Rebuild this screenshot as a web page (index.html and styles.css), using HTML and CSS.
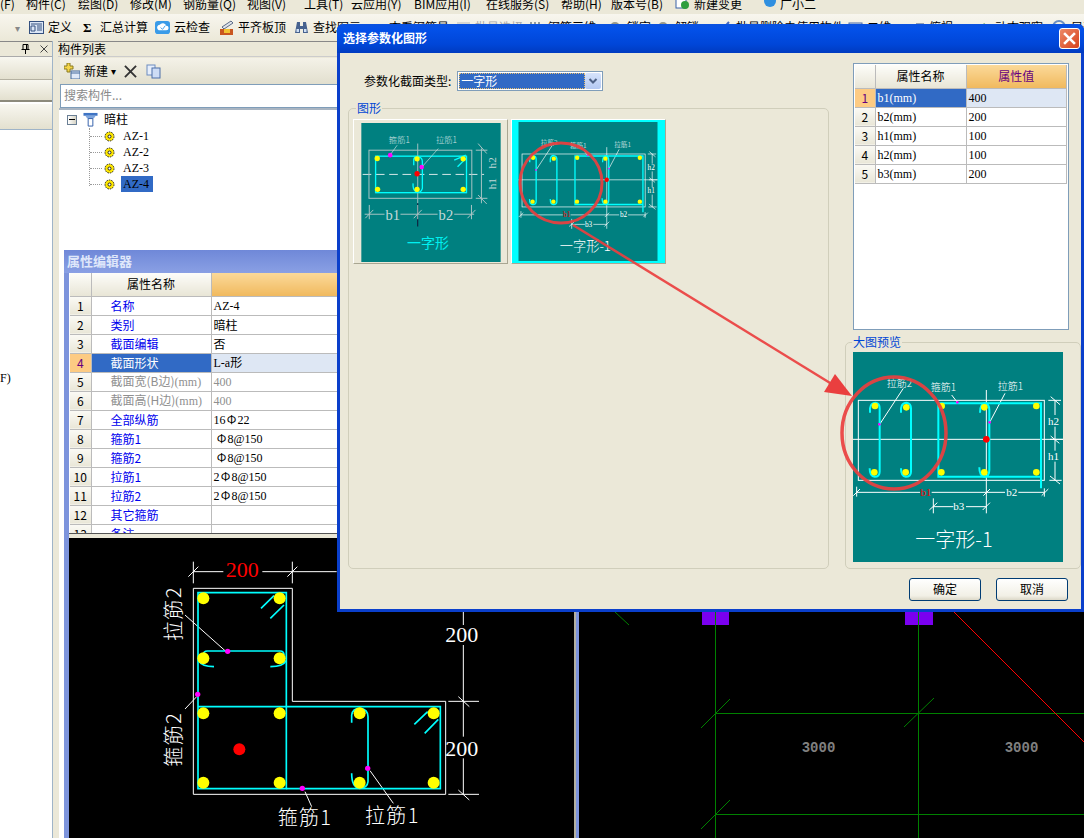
FILE: index.html
```html
<!DOCTYPE html>
<html lang="zh-CN">
<head>
<meta charset="utf-8">
<title>选择参数化图形</title>
<link rel="stylesheet" href="styles.css">
</head>
<body>
<div class="app">
  <nav class="menubar">
    <span>(F)</span><span>构件(C)</span><span>绘图(D)</span><span>修改(M)</span><span>钢筋量(Q)</span><span>视图(V)</span><span>工具(T)</span><span>云应用(Y)</span><span>BIM应用(I)</span><span>在线服务(S)</span><span>帮助(H)</span><span>版本号(B)</span>
    <svg class="ico" viewBox="0 0 15 15"><rect x="1" y="1" width="10" height="12" fill="#fff" stroke="#3a62a8"/><circle cx="10" cy="10" r="4" fill="#2f9e3f"/></svg>
    <span>新建变更</span>
    <svg class="ico" viewBox="0 0 15 15"><circle cx="7" cy="6" r="6" fill="#2f8fe0"/></svg>
    <span>广小二</span>
  </nav>
  <div class="toolbar">
    <span class="grip">▾</span>
    <span class="tool"><svg class="ico" viewBox="0 0 15 15"><rect x=".5" y="1.5" width="14" height="12" fill="#dbe6f6" stroke="#34507f"/><path d="M2 4h11M8 6h5M8 8h5M8 10h5M2 6h4v5H2z" stroke="#34507f" fill="none"/></svg>定义</span>
    <span class="tool sumtool"><b class="sigma">Σ</b>汇总计算</span>
    <span class="tool"><svg class="ico" viewBox="0 0 16 16"><rect x="0" y="1" width="16" height="14" rx="3" fill="#3a9be8"/><path d="M3 10a3 3 0 0 1 2-5 4 4 0 0 1 7 1 2.500 2.500 0 0 1 0 5H4z" fill="#fff"/><path d="M6 8l2 2 3-4" stroke="#3a9be8" fill="none"/></svg>云检查</span>
    <span class="tool"><svg class="ico" viewBox="0 0 15 15"><path d="M1 9h13v6H1z" fill="#c9561f"/><path d="M3 7l9-6 2 2-9 6z" fill="#dfe3ea" stroke="#5a6a86"/><rect x="5" y="9" width="6" height="4" fill="#f2c230"/></svg>平齐板顶</span>
    <span class="tool"><svg class="ico" viewBox="0 0 15 15"><path d="M3 2h3v4h3V2h3l2 11H9V9H6v4H1z" fill="#47628f"/><rect x="2.500" y="9" width="2.500" height="3" fill="#cfe0f5"/><rect x="10" y="9" width="2.500" height="3" fill="#cfe0f5"/></svg>查找图元</span>
    <span class="tool"><svg class="ico" viewBox="0 0 15 15"><path d="M2 12l5-5M8 10l5-5" stroke="#666"/></svg>查看钢筋量</span>
    <span class="tool off"><svg class="ico" viewBox="0 0 15 15"><path d="M1 3h13M3 7h9M1 11h13" stroke="#bbb"/></svg>批量选择</span>
    <span class="tool"><svg class="ico" viewBox="0 0 15 15"><path d="M2 2v11M6 2v11M10 2v11M1 5h12" stroke="#345"/></svg>钢筋三维</span>
    <span class="tool"><svg class="ico" viewBox="0 0 15 15"><circle cx="7" cy="7" r="4" fill="none" stroke="#998" stroke-width="2"/></svg>锁定</span>
    <span class="tool"><svg class="ico" viewBox="0 0 15 15"><circle cx="7" cy="7" r="4" fill="none" stroke="#998" stroke-width="2"/></svg>解锁</span>
    <span class="tool"><svg class="ico" viewBox="0 0 15 15"><path d="M2 13L12 2" stroke="#46b" stroke-width="2"/></svg>批量删除未使用构件</span>
    <span class="tool"><svg class="ico" viewBox="0 0 15 15"><rect x="1" y="3" width="13" height="10" fill="#cfdcf2" stroke="#4a6aa5"/></svg>二维</span>
    <span class="tool"><svg class="ico" viewBox="0 0 15 15"><path d="M1 13l5-9h8l-5 9z" fill="#6f8fc4" stroke="#334d7a"/></svg>俯视</span>
    <span class="tool"><svg class="ico" viewBox="0 0 15 15"><path d="M2 12l6-9 5 4-3 6z" fill="#5aa05a"/></svg>动态观察</span>
    <span class="tool"><svg class="ico" viewBox="0 0 15 15"><circle cx="7" cy="7" r="6" fill="none" stroke="#6b8fc2" stroke-width="2"/></svg>局部</span>
  </div>

  <main class="main">
    <aside class="leftpane">
      <div class="lefthead">
        <svg class="pin" viewBox="0 0 9 10"><path d="M2 .5h5v5H2zM.5 5.500h8M4.500 6v4M5.500 1v4" fill="none" stroke="#000"/></svg>
        <svg class="closex" viewBox="0 0 8 8"><path d="M.5.5l7 7M7.500.5l-7 7" stroke="#444"/></svg>
      </div>
      <div class="leftbtn"></div>
      <div class="leftbtn raised"></div>
      <div class="leftbtn tall"></div>
      <div class="leftbody"><span class="leftnote">F)</span></div>
    </aside>
    <section class="center">
      <div class="listhead">构件列表</div>
      <div class="listtools">
        <svg class="ico new" viewBox="0 0 16 16"><path d="M3 0h3v3h3v3H6v3H3V6H0V3h3z" fill="#f4d54a" stroke="#8a7a20"/><rect x="7" y="8" width="9" height="8" fill="#dfe9f8" stroke="#456a9c"/><path d="M7 10h9" stroke="#456a9c"/></svg>
        <span>新建</span><span class="caret">▾</span>
        <svg class="ico del" viewBox="0 0 14 14"><path d="M1 1l12 12M13 1L1 13" stroke="#333" stroke-width="2"/></svg>
        <svg class="ico" viewBox="0 0 15 15"><rect x="1" y="1" width="8" height="10" fill="#e6eefb" stroke="#6d8cc0"/><rect x="6" y="4" width="8" height="10" fill="#cddcf5" stroke="#4d6fa8"/></svg>
      </div>
      <div class="search">搜索构件...</div>
      <div class="treepane">
        <div class="tree">
          <div class="treeroot">
            <span class="minus"></span>
            <svg class="ico col" viewBox="0 0 15 16"><path d="M0 1h15v3H0z" fill="#3f74c4"/><path d="M2 4h11l-2 3H4z" fill="#7fa6de"/><path d="M5 7h5v8H5z" fill="#fff" stroke="#2c5aa8"/></svg>
            <span>暗柱</span>
          </div>
          <div class="treekids">
            <div class="treeitem"><i class="stem"></i><svg class="gear" viewBox="0 0 11 11"><circle cx="5.500" cy="5.500" r="4.500" fill="#ffe800" stroke="#222" stroke-dasharray="1.500 1"/><circle cx="5.500" cy="5.500" r="1.500" fill="#fff" stroke="#222"/></svg><span class="mono">AZ-1</span></div>
            <div class="treeitem"><i class="stem"></i><svg class="gear" viewBox="0 0 11 11"><circle cx="5.500" cy="5.500" r="4.500" fill="#ffe800" stroke="#222" stroke-dasharray="1.500 1"/><circle cx="5.500" cy="5.500" r="1.500" fill="#fff" stroke="#222"/></svg><span class="mono">AZ-2</span></div>
            <div class="treeitem"><i class="stem"></i><svg class="gear" viewBox="0 0 11 11"><circle cx="5.500" cy="5.500" r="4.500" fill="#ffe800" stroke="#222" stroke-dasharray="1.500 1"/><circle cx="5.500" cy="5.500" r="1.500" fill="#fff" stroke="#222"/></svg><span class="mono">AZ-3</span></div>
            <div class="treeitem"><i class="stem"></i><svg class="gear" viewBox="0 0 11 11"><circle cx="5.500" cy="5.500" r="4.500" fill="#ffe800" stroke="#222" stroke-dasharray="1.500 1"/><circle cx="5.500" cy="5.500" r="1.500" fill="#fff" stroke="#222"/></svg><span class="mono sel">AZ-4</span></div>
          </div>
        </div>
        <div class="props">
          <div class="propstitle">属性编辑器</div>
          <div class="propswrap">
            <table class="grid propsgrid">
              <colgroup><col class="c-num"><col class="c-name"><col></colgroup>
              <thead><tr><th></th><th>属性名称</th><th class="valhead">属性值</th></tr></thead>
              <tbody>
                <tr><th>1</th><td class="link">名称</td><td class="mono">AZ-4</td></tr>
                <tr><th>2</th><td class="link">类别</td><td>暗柱</td></tr>
                <tr><th>3</th><td class="link">截面编辑</td><td>否</td></tr>
                <tr class="cur"><th>4</th><td class="link">截面形状</td><td><span class="mono">L-a</span>形</td></tr>
                <tr class="dim"><th>5</th><td class="link">截面宽(B边)<span class="mono">(mm)</span></td><td class="mono">400</td></tr>
                <tr class="dim"><th>6</th><td class="link">截面高(H边)<span class="mono">(mm)</span></td><td class="mono">400</td></tr>
                <tr><th>7</th><td class="link">全部纵筋</td><td class="mono">16<span class="rebar">Φ</span>22</td></tr>
                <tr><th>8</th><td class="link">箍筋1</td><td class="mono"><span class="rebar lead">Φ</span>8@150</td></tr>
                <tr><th>9</th><td class="link">箍筋2</td><td class="mono"><span class="rebar lead">Φ</span>8@150</td></tr>
                <tr><th>10</th><td class="link">拉筋1</td><td class="mono">2<span class="rebar">Φ</span>8@150</td></tr>
                <tr><th>11</th><td class="link">拉筋2</td><td class="mono">2<span class="rebar">Φ</span>8@150</td></tr>
                <tr><th>12</th><td class="link">其它箍筋</td><td></td></tr>
                <tr><th>13</th><td class="link">备注</td><td></td></tr>
              </tbody>
            </table>
          </div>
          <div class="propsfoot"></div>
          <div class="canvases">
            <svg class="cad" viewBox="27 -6 1515 900">
              <g fill="none" stroke="#fff" stroke-width="3">
                <path d="M400 145H697V484H1157V763H400Z"/>
                <path d="M400 65V130M697 65V130M385 110L415 80M682 110L712 80M400 95H490M607 95H830"/>
                <path d="M1210 215V255M1210 315V590M1210 655V763M1165 484H1257M1165 763H1257M1195 470L1228 500M1195 750L1228 780"/>
                <path d="M375 225L495 332M375 507L410 470M735 755L755 800M930 692L1000 790"/>
              </g>
              <g fill="none" stroke="#00ffff" stroke-width="5">
                <path d="M414 158H679V746H414Z"/>
                <path d="M414 500H1141V746H679"/>
                <path d="M430 345Q430 333 442 333H660Q672 333 672 345M416 362Q425 380 462 380M678 362Q670 380 631 380"/>
                <path d="M875 548V525Q878 505 900 505Q924 508 924 530V725Q922 745 898 745Q875 742 875 700"/>
                <path d="M603 205L642 167M631 235L672 195M1063 553L1103 515M1094 580L1135 538"/>
              </g>
              <g fill="#ffff00">
                <circle cx="430" cy="175" r="18"/><circle cx="659" cy="175" r="18"/><circle cx="430" cy="355" r="18"/><circle cx="659" cy="355" r="18"/><circle cx="430" cy="520" r="18"/><circle cx="659" cy="520" r="18"/><circle cx="430" cy="728" r="18"/><circle cx="659" cy="728" r="18"/><circle cx="899" cy="520" r="18"/><circle cx="1121" cy="520" r="18"/><circle cx="899" cy="728" r="18"/><circle cx="1121" cy="728" r="18"/>
              </g>
              <circle cx="538" cy="628" r="18" fill="#ff0000"/>
              <g fill="#ff00ff"><circle cx="503" cy="334" r="8"/><circle cx="413" cy="463" r="8"/><circle cx="923" cy="685" r="8"/><circle cx="727" cy="745" r="8"/></g>
              <text class="num big red" x="497" y="110">200</text>
              <text class="num big" x="1156" y="307">200</text>
              <text class="num big" x="1156" y="649">200</text>
              <text class="cjk lbl" x="653" y="856">箍筋1</text>
              <text class="cjk lbl" x="915" y="850">拉筋1</text>
              <text class="cjk lbl" transform="translate(362 303) rotate(-90)">拉筋2</text>
              <text class="cjk lbl" transform="translate(362 680) rotate(-90)">箍筋2</text>
            </svg>
            <div class="splitter"></div>
            <svg class="cad" viewBox="579 538 505 300">
              <g fill="none" stroke="#008000">
                <path d="M715.500 538V838M918.500 538V838M715.500 713.500H1084M715.500 814.500H1084"/>
                <path d="M701 728L730 699M904 727L934 698M701 829L730 800M615 612L629 625"/>
              </g>
              <path d="M702 538h27v87h-27zM905 538h28v87h-28z" fill="#7a00f0"/>
              <path d="M715.500 538v87M918.500 538v87" stroke="#008000"/>
              <path d="M950 608L1084 742" stroke="#ff0000"/>
              <text class="dimtxt" x="818.500" y="752">3000</text>
              <text class="dimtxt" x="1021.500" y="752">3000</text>
            </svg>
          </div>
        </div>
      </div>
    </section>
  </main>

  <div class="dialog">
    <header class="dlgtitle">
      <span>选择参数化图形</span>
      <span class="dlgclose"><svg viewBox="0 0 12 12"><path d="M1 1l10 10M11 1L1 11" stroke="#fff" stroke-width="2.400"/></svg></span>
    </header>
    <div class="dlgbody">
      <div class="dlgmain">
        <div class="dlgleft">
          <div class="comborow">
            <span>参数化截面类型:</span>
            <div class="combo"><span class="comboval">一字形</span><span class="comboarrow"><svg viewBox="0 0 9 7"><path d="M1 1l3.500 3.500L8 1" fill="none" stroke="#4d6185" stroke-width="2"/></svg></span></div>
          </div>
          <fieldset class="group shapes">
            <legend>图形</legend>
            <div class="thumbs">
              <div class="thumb">
                <svg class="drawing small" viewBox="60 68 420 419">
                  <rect x="60" y="68" width="420" height="419" fill="#008080"/>
                  <path d="M64 223H430" stroke="#d8e8e8" stroke-width="3" stroke-dasharray="26 14"/>
                  <path d="M230 130V310" stroke="#9fc0c0" stroke-width="3"/><path d="M230 310V380" stroke="#113" stroke-width="3"/>
                  <rect x="83" y="150" width="310" height="145" fill="none" stroke="#a8c4c4" stroke-width="3"/>
                  <rect x="103" y="168" width="274" height="110" fill="none" stroke="#00ffff" stroke-width="4"/>
                  <path d="M218 195V178Q220 168 232 170Q244 172 244 185V265Q240 280 226 276Q214 270 216 250M340 180L375 165M350 200L375 175" fill="none" stroke="#00ffff" stroke-width="4"/>
                  <g fill="#ffff00"><circle cx="108" cy="175" r="8"/><circle cx="228" cy="176" r="8"/><circle cx="367" cy="176" r="8"/><circle cx="109" cy="268" r="8"/><circle cx="228" cy="268" r="8"/><circle cx="367" cy="268" r="8"/></g>
                  <circle cx="228" cy="221" r="8" fill="#ff0000"/>
                  <circle cx="147" cy="165" r="7" fill="#ff00ff"/><circle cx="242" cy="201" r="7" fill="#ff00ff"/>
                  <path d="M150 160L168 135M245 198L292 145" stroke="#cfe0e0" stroke-width="2"/>
                  <g fill="none" stroke="#a8c4c4" stroke-width="3"><path d="M405 150H440M405 295H440M422 145V310M412 130L438 160M412 285L438 312"/><path d="M70 343H130M178 343H290M340 343H400M84 315V358M230 315V358M392 315V358M72 355L96 330M218 355L242 330M380 355L404 330"/></g>
                  <text class="cjk tiny" x="143" y="128">箍筋1</text>
                  <text class="cjk tiny" x="285" y="128">拉筋1</text>
                  <text class="num mid" transform="translate(467 205) rotate(-90)">h2</text>
                  <text class="num mid" transform="translate(467 268) rotate(-90)">h1</text>
                  <text class="num b" x="133" y="360">b1</text>
                  <text class="num b" x="293" y="360">b2</text>
                  <text class="cjk title cy" x="198" y="446">一字形</text>
                </svg>
              </div>
              <div class="thumb active">
                <svg class="drawing thumb2" viewBox="39 66 630 630"><use href="#yz1"/></svg>
              </div>
            </div>
          </fieldset>
        </div>
        <div class="dlgright">
          <div class="paramsbox">
            <table class="grid params">
              <colgroup><col class="c-pnum"><col class="c-pname"><col></colgroup>
              <thead><tr><th></th><th>属性名称</th><th class="valhead">属性值</th></tr></thead>
              <tbody>
                <tr class="cur"><th>1</th><td class="mono">b1(mm)</td><td class="mono">400</td></tr>
                <tr><th>2</th><td class="mono">b2(mm)</td><td class="mono">200</td></tr>
                <tr><th>3</th><td class="mono">h1(mm)</td><td class="mono">100</td></tr>
                <tr><th>4</th><td class="mono">h2(mm)</td><td class="mono">100</td></tr>
                <tr><th>5</th><td class="mono">b3(mm)</td><td class="mono">200</td></tr>
              </tbody>
            </table>
          </div>
          <fieldset class="group preview">
            <legend>大图预览</legend>
            <svg class="drawing large" viewBox="39 66 630 630">
              <g id="yz1">
                <rect x="39" y="66" width="630" height="630" fill="#008080"/>
                <g fill="none" stroke="#fff" stroke-width="3">
                  <rect x="55" y="211" width="558" height="240"/>
                  <path d="M39 328H669M439 180V550"/>
                  <path d="M50 487H240M275 487H495M535 487H613M50 470V500M613 475V500M40 497L60 477M430 497L450 477M605 497L625 477"/>
                  <path d="M280 530H340M378 530H439M280 505V550M268 540L292 518M428 540L450 518"/>
                  <path d="M645 211V255M645 290V362M645 395V451M625 211H663M630 328H669M628 451H665M632 200L660 224M632 318L658 340M630 438L660 462"/>
                  <path d="M119 283L190 175M335 195L352 217M449 277L495 190"/>
                </g>
                <g fill="none" stroke="#00ffff" stroke-width="6">
                  <path d="M603 475V220H295V440H603"/>
                  <path d="M90 248V235Q92 218 107 218Q119 220 119 235V425Q119 440 104 440Q89 440 89 415"/>
                  <path d="M183 248V235Q185 218 199 218Q213 220 213 235V425Q213 440 197 440Q183 440 183 415"/>
                  <path d="M420 248Q420 222 434 220Q448 222 448 240V420Q448 440 433 440Q418 438 418 412"/>
                </g>
                <g fill="#ffff00"><circle cx="105" cy="228" r="10"/><circle cx="199" cy="232" r="10"/><circle cx="305" cy="228" r="10"/><circle cx="433" cy="232" r="10"/><circle cx="589" cy="228" r="10"/><circle cx="103" cy="427" r="10"/><circle cx="197" cy="427" r="10"/><circle cx="304" cy="427" r="10"/><circle cx="433" cy="427" r="10"/><circle cx="589" cy="427" r="10"/></g>
                <circle cx="439" cy="328" r="10" fill="#ff0000"/>
                <g fill="#ff00ff"><circle cx="118" cy="283" r="4"/><circle cx="352" cy="217" r="4"/><circle cx="449" cy="277" r="4"/></g>
                <text class="cjk pvl" x="140" y="172">拉筋2</text>
                <text class="cjk pvl" x="272" y="182">箍筋1</text>
                <text class="cjk pvl" x="473" y="180">拉筋1</text>
                <text class="num pvn red" x="241" y="497">b1</text>
                <text class="num pvn" x="499" y="497">b2</text>
                <text class="num pvn" x="340" y="540">b3</text>
                <text class="num pvn" x="624" y="285">h2</text>
                <text class="num pvn" x="624" y="390">h1</text>
                <text class="cjk pvt" x="226" y="650">一字形-1</text>
              </g>
            </svg>
          </fieldset>
        </div>
      </div>
      <div class="dlgfoot">
        <button class="btn">确定</button>
        <button class="btn">取消</button>
      </div>
    </div>
    <svg class="annot" viewBox="337 24 747 588">
      <g fill="none" stroke="#ea3f3f" stroke-opacity=".92">
        <ellipse cx="561" cy="183" rx="41" ry="40" stroke-width="3"/>
        <ellipse cx="894" cy="433" rx="52" ry="56" stroke-width="3.500"/>
        <path d="M573 225L835 386" stroke-width="2.500"/>
      </g>
      <path d="M852 396L824 392L835 374Z" fill="#ea3f3f"/>
    </svg>
  </div>
</div>
</body>
</html>
```
FILE: styles.css
```css
* { box-sizing: border-box; }
html, body { margin: 0; height: 100%; overflow: hidden; }
body {
  font: 12px/1.2 "Noto Sans CJK SC", "Liberation Sans", sans-serif;
  color: #000;
  background: #ebe8d8;
}
.app { position: relative; width: 1084px; height: 838px; display: flex; flex-direction: column; overflow: hidden; }
.ico { width: 15px; height: 15px; flex: none; display: block; }
.mono { font-family: "Liberation Serif", "Noto Sans CJK SC", serif; font-size: 12px; white-space: pre; line-height: 14px; }
.rebar { display: inline-block; width: 12px; text-align: center; font: 12px/14px "Noto Sans CJK SC", sans-serif; }
.rebar.lead { margin-left: 2px; }

/* menu + toolbar */
.menubar {
  height: 14px; flex: none; overflow: hidden; background: #ebe8d8;
  display: grid; align-items: end;
  grid-template-rows: 10px;
  grid-template-columns: 26px 52px 52px 53px 64px 57px 47px 63px 72px 75px 50px 64px 19px 69px 17px auto;
  line-height: 12px; white-space: nowrap; font-size: 12px;
}
.toolbar {
  height: 27px; flex: none; overflow: hidden;
  background: linear-gradient(#f8f6ee, #ebe8d8);
  display: grid; align-items: center;
  grid-template-columns: 29px 54px 72px 64px 75px 76px 86px 73px 79px 48px 61px 131px 62px 66px 76px auto;
  white-space: nowrap;
}
.grip { color: #888; text-align: right; padding-right: 9px; font-size: 10px; }
.tool { display: flex; align-items: center; gap: 4px; }
.sumtool { gap: 8px; }
.off { color: #aaa; }
.sigma { font: bold 13px "Liberation Serif", serif; width: 9px; }

/* layout */
.main { flex: 1; display: flex; min-height: 0; }
.leftpane {
  width: 53px; flex: none; display: flex; flex-direction: column;
  background: #fff; border-right: 1px solid #9fb4c8;
}
.lefthead { height: 16px; flex: none; background: #ebe8d8; display: flex; justify-content: flex-end; align-items: center; gap: 10px; padding-right: 4px; border-top: 1px solid #888; border-bottom: 1px solid #aaa; }
.pin { width: 9px; height: 10px; display: block; }
.closex { width: 8px; height: 8px; display: block; }
.leftbtn { height: 23px; flex: none; background: linear-gradient(#f8f7f0, #e3e0cf); border-bottom: 1px solid #b5b2a2; }
.leftbtn.raised { height: 22px; border-bottom: 2px solid #8c8a7c; }
.leftbtn.tall { height: 26px; margin-top: 2px; border-bottom: 1px solid #9fb4c8; }
.leftbody { flex: 1; padding-top: 240px; }
.leftnote { font: 12px "Liberation Serif", serif; }

.center { flex: 1; min-width: 0; display: flex; flex-direction: column; padding-left: 5px; background: #ebe8d8; }
.listhead { height: 16px; flex: none; line-height: 13px; border-top: 1px solid #888; border-bottom: 1px solid #ccc; }
.listtools { height: 26px; flex: none; margin: 1px 0 0 2px; display: flex; align-items: center; gap: 4px; padding-left: 4px; background: linear-gradient(#f4f2e8, #e2dfce); }
.listtools .new { width: 16px; height: 16px; }
.caret { font-size: 10px; margin-left: -1px; }
.del { width: 13px; height: 13px; margin: 0 5px 0 4px; }
.search { height: 24px; flex: none; margin-left: 2px; padding: 0 3px; line-height: 19px; background: #fff; border: 1px solid #7f9db9; color: #8a8a8a; }

.treepane { flex: 1; min-height: 0; margin-left: 1px; padding-left: 5px; display: flex; flex-direction: column; background: #fff; border-top: 2px solid #a9b5c2; }
.tree { height: 140px; flex: none; padding: 1px 0 0 3px; }
.treeroot { display: flex; align-items: center; height: 17px; gap: 6px; }
.minus { width: 10px; height: 10px; flex: none; border: 1px solid #6a7f95; background: linear-gradient(90deg, #fff, #d6d3c4); }
.minus::after { content: ""; display: block; height: 1px; margin: 3px 1px 0; background: #000; }
.treekids { margin-left: 22px; height: 58px; border-left: 1px dotted #999; }
.treeitem { height: 16px; display: flex; align-items: center; }
.stem { width: 12px; border-top: 1px dotted #999; flex: none; }
.gear { width: 11px; height: 11px; margin: 0 6px 0 2px; flex: none; }
.treeitem .mono { padding: 0 2px; line-height: 16px; }
.treeitem .sel { background: #316ac5; padding-right: 4px; }

.props { flex: 1; min-height: 0; display: flex; flex-direction: column; border-left: 5px solid #7d94dc; }
.propstitle { height: 23px; flex: none; margin-left: -5px; padding: 3px 0 0 3px; font-weight: bold; font-size: 13px; color: #dfe7fa; background: linear-gradient(#6f88d8, #8aa0e4); }
.propswrap { height: 260px; flex: none; overflow: hidden; background: #fff; padding-left: 1px; }
.propsfoot { height: 5px; flex: none; background: #ebe8d8; border-top: 1px solid #555; }
.canvases { flex: 1; min-height: 0; display: flex; }
.cad { width: 505px; height: 300px; flex: none; display: block; background: #000; }
.splitter { width: 5px; flex: none; background: linear-gradient(90deg, #b4b0a0 50%, #7d94dc 50%); }
.dimtxt { font: bold 14px "Liberation Mono", monospace; fill: #808080; text-anchor: middle; }

/* grids */
.grid { border-collapse: collapse; table-layout: fixed; width: 100%; }
.grid th, .grid td { height: 19px; padding: 0 2px; border-right: 1px solid #bbb; border-bottom: 1px solid #bbb; font-weight: normal; overflow: hidden; white-space: nowrap; line-height: 14px; }
.grid thead th { height: 23px; background: linear-gradient(#fdfdf9, #e8e5d6); text-align: center; }
.grid thead .valhead { background: linear-gradient(#fbd999, #f0b95e); color: #660080; }
.grid tbody th { background: linear-gradient(#fbfaf5, #e9e6d7); text-align: center; }
.grid .cur th { background: #fdcb83; color: #660080; }
.grid .cur td { background: #dee7f4; }
.grid .cur td:first-of-type { background: #316ac5; color: #fff; }
.grid .link { color: #0000ee; padding-left: 19px; }
.grid .cur .link { color: #fff; }
.grid .dim td, .grid .dim .link { color: #8f8f8f; }
.propsgrid { width: 700px; }
.c-num { width: 21px; }
.c-name { width: 120px; }
.c-pnum { width: 20px; }
.c-pname { width: 91px; }

/* dialog */
.dialog {
  position: absolute; left: 337px; top: 24px; width: 747px; height: 588px;
  display: flex; flex-direction: column;
  background: #ebe8d8; border: 3px solid #0a3fcb; border-top: 0; border-radius: 6px 6px 0 0;
}
.dlgtitle {
  height: 29px; flex: none; margin: 0 -3px; padding: 0 4px 0 6px;
  display: flex; align-items: center; justify-content: space-between;
  color: #fff; font-weight: bold; font-size: 12px;
  background: linear-gradient(#0a52e0, #0350e8 20%, #0046d8 70%, #003bc0);
  border-radius: 6px 6px 0 0;
}
.dlgclose { width: 21px; height: 21px; border: 1px solid #fff; border-radius: 3px; background: linear-gradient(135deg, #ec8a68, #d8421c); padding: 3px; display: block; }
.dlgclose svg { display: block; width: 13px; height: 13px; }
.dlgbody { flex: 1; min-height: 0; display: flex; flex-direction: column; padding: 9px 0 8px 8px; }
.dlgmain { height: 507px; flex: none; display: flex; gap: 16px; }
.dlgleft { width: 481px; flex: none; display: flex; flex-direction: column; }
.dlgright { width: 236px; flex: none; display: flex; flex-direction: column; }
.comborow { height: 20px; margin-top: 9px; margin-bottom: 10px; padding-left: 16px; display: flex; align-items: center; gap: 6px; flex: none; }
.combo { width: 146px; height: 20px; display: flex; align-items: center; background: #fff; border: 1px solid #7f9db9; padding: 1px; }
.comboval { flex: 1; height: 16px; line-height: 13px; padding-left: 1px; background: #316ac5; color: #fff; border: 1px dotted #e8c070; }
.comboarrow { width: 16px; height: 16px; background: linear-gradient(#d6e3fb, #b4c9f2); border-radius: 2px; padding: 5px 3px; display: block; }
.comboarrow svg { width: 10px; height: 7px; display: block; }
.group { margin: 0; min-width: 0; padding: 0; border: 1px solid #d0cebb; border-radius: 5px; }
.group legend { padding: 0 1px; color: #0046d5; line-height: 14px; }
.shapes { flex: 1; padding: 4px 4px 0; }
.shapes legend { margin-left: 3px; }
.thumbs { display: flex; gap: 3px; }
.thumb { width: 155px; height: 145px; padding: 3px 7px; border: 1px solid; border-color: #fff #a9a692 #a9a692 #fff; background: #ebe8d8; }
.thumb.active { width: 155px; padding: 2px 6px; background: #00ffff; }
.drawing { display: block; }
.drawing.small { width: 140px; height: 139px; }
.drawing.thumb2 { width: 140px; height: 139px; }
.paramsbox { height: 267px; flex: none; margin: 1px 12px 5px 8px; padding: 1px; border: 1px solid #7f9db9; background: #fff; }
.params { width: 212px; }
.preview { flex: 1; padding: 3px 7px; }
.preview legend { margin-left: -1px; }
.drawing.large { width: 210px; height: 210px; }
.dlgfoot { flex: 1; display: flex; justify-content: flex-end; gap: 15px; padding: 9px 13px 0 0; }
.btn { width: 72px; height: 23px; padding: 0; font: inherit; border: 1px solid #003c74; border-radius: 3px; background: linear-gradient(#fff, #f2f0e6 80%, #dcd8c8); color: #000; }
.annot { position: absolute; left: -3px; top: 0; width: 747px; height: 588px; pointer-events: none; }

/* SVG text */
.cjk { font-family: "Noto Sans CJK SC", sans-serif; font-weight: 300; fill: #fff; }
.num { font-family: "Liberation Serif", serif; fill: #fff; }
.big { font-size: 66px; }
.red { fill: #ff0000; }
.lbl { font-size: 60px; letter-spacing: 4px; }
.tiny { font-size: 25px; fill: #cfe0e0; }
.mid { font-size: 34px; fill: #c4d8d8; }
.b { font-size: 44px; fill: #c4d8d8; }
.title { font-size: 42px; font-weight: 400; }
.cy { fill: #00f0f0; }
.pvl { font-size: 30px; }
.pvn { font-size: 33px; }
.pvt { font-size: 60px; }
```
